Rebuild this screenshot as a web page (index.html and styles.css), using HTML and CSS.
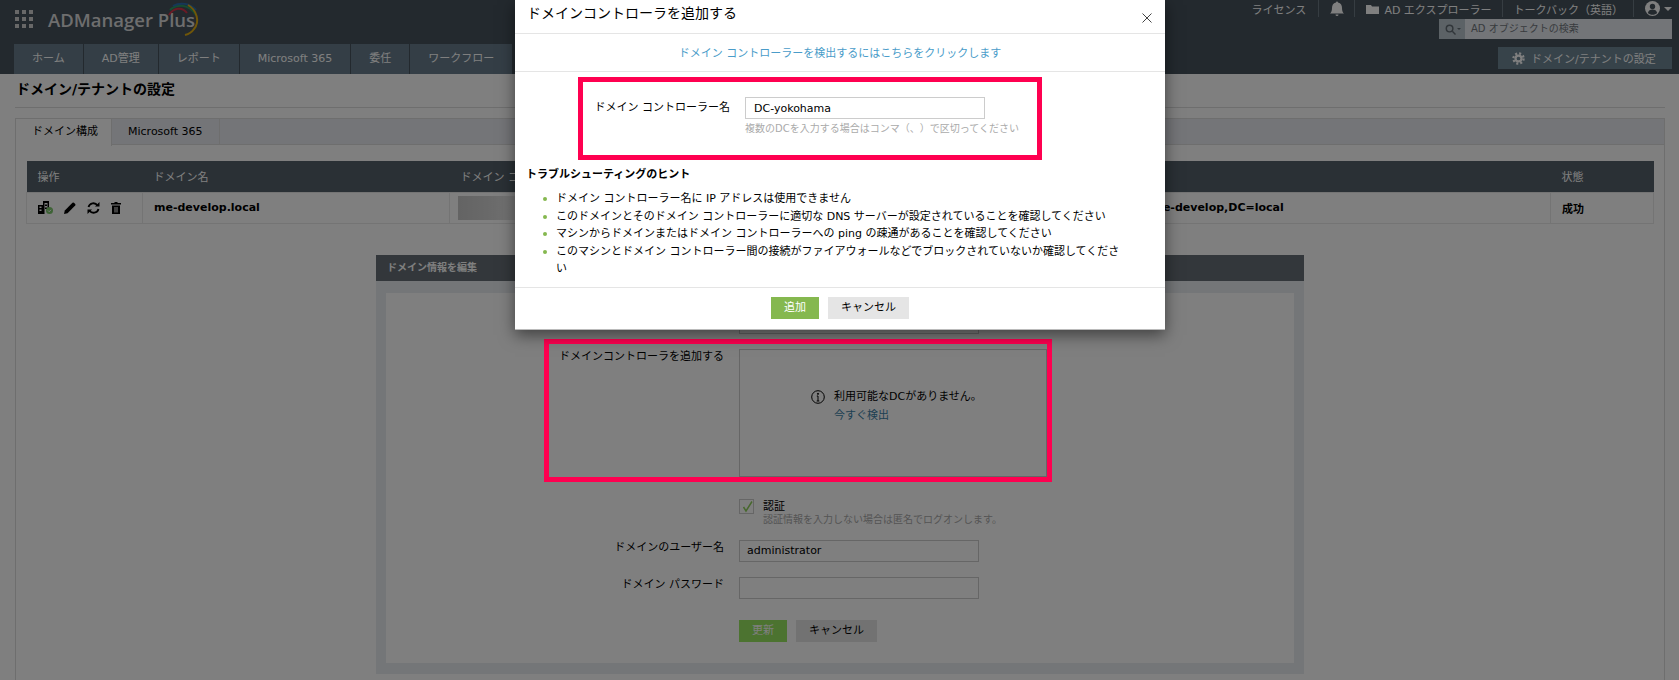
FILE: index.html
```html
<!DOCTYPE html>
<html lang="ja">

<head>
    <meta charset="utf-8" />
    <title>ドメイン/テナントの設定</title>
    <link rel="stylesheet" href="styles.css">
</head>

<body>
    <header class="top_bar">
        <div class="top_left">
            <div class="logo_row">
                <i class="app_grid"><b></b><b></b><b></b><b></b><b></b><b></b><b></b><b></b><b></b></i>
                <span class="logo_text">ADManager Plus</span>
                <svg class="logo_arc" width="36" height="34" viewBox="0 0 36 34" fill="none" stroke-width="2">
                    <path d="M2 13C6 6 15 4 20 11" stroke="#d4354a" />
                    <path d="M3 8C9 2 21 1 29 13" stroke="#2d9a62" />
                    <path d="M6 4C13 0 23 1 29 8" stroke="#2a6fb0" />
                    <path d="M21 3C30 8 33 20 27 27C25 30 22 32 18 33" stroke="#e0ac10" />
                </svg>
            </div>
            <nav class="main_nav">
                <a>ホーム</a><a>AD管理</a><a>レポート</a><a>Microsoft 365</a><a>委任</a><a>ワークフロー</a>
            </nav>
        </div>
        <div class="top_right">
            <div class="util_bar">
                <span class="util_item util_first">ライセンス</span>
                <span class="util_item">
                    <svg width="14" height="16" viewBox="0 0 14 16" fill="#fff">
                        <path d="M6 1.500a1 1 0 0 1 2 0C11 2 12 4.500 12 7c0 3 .8 4.500 2 5.500H0C1.200 11.500 2 10 2 7c0-2.500 1-5 4-5.500z" />
                        <path d="M5.500 13.500h3a1.500 1.500 0 0 1-3 0z" />
                    </svg>
                </span>
                <span class="util_item">
                    <svg class="folder_icon" width="13" height="10" viewBox="0 0 13 10" fill="#fff">
                        <path d="M0 1h5l1 1.500h7V10H0z" />
                    </svg>
                    AD エクスプローラー
                </span>
                <span class="util_item">トークバック（英語）</span>
                <span class="util_item util_user">
                    <svg width="15" height="15" viewBox="0 0 15 15">
                        <circle cx="7.500" cy="7.500" r="7.500" fill="#fff" />
                        <circle cx="7.500" cy="5.500" r="2.700" fill="#46525c" />
                        <path d="M2.800 12c.5-2.500 2.500-3.500 4.700-3.500s4.200 1 4.700 3.500c-1.200 1.200-2.900 1.800-4.700 1.800S4 13.200 2.800 12z" fill="#46525c" />
                    </svg>
                    <i class="caret"></i>
                </span>
            </div>
            <div class="search_box">
                <span class="search_icon">
                    <svg width="11" height="11" viewBox="0 0 12 12" fill="none" stroke="#626c74" stroke-width="1.600">
                        <circle cx="5" cy="5" r="3.600" />
                        <path d="M8 8l3.500 3.500" />
                    </svg>
                    <i class="caret caret_dark"></i>
                </span>
                <span class="search_text">AD オブジェクトの検索</span>
            </div>
            <a class="domain_btn">
                <svg width="13" height="13" viewBox="0 0 14 14" fill="none" stroke="#fff">
                    <circle cx="7" cy="7" r="3.200" stroke-width="2.400" />
                    <circle cx="7" cy="7" r="5.500" stroke-width="2.400" stroke-dasharray="2.200 2.120" />
                </svg>
                ドメイン/テナントの設定
            </a>
        </div>
    </header>

    <main class="page_main">
        <h1 class="page_title">ドメイン/テナントの設定</h1>
        <div class="tab_box">
            <div class="tab_strip">
                <span class="tab_item tab_active">ドメイン構成</span>
                <span class="tab_item">Microsoft 365</span>
            </div>

            <table class="domain_table">
                <thead>
                    <tr>
                        <th class="col_action">操作</th>
                        <th class="col_name">ドメイン名</th>
                        <th class="col_dc">ドメイン コ</th>
                        <th class="col_dn"></th>
                        <th>状態</th>
                    </tr>
                </thead>
                <tbody>
                    <tr>
                        <td>
                            <div class="row_icons">
                                <svg width="15" height="13" viewBox="0 0 15 13">
                                    <path d="M5 0h6v7H9.500V2h-3v11H0V4h5z" fill="#000" />
                                    <path d="M1.500 5.500h2V7h-2zM1.500 8.500h2V10h-2z" fill="#fff" />
                                    <path d="M7 3.500h2V5H7zM7 6.500h2V8H7z" fill="#000" />
                                    <circle cx="11.500" cy="9.500" r="3.500" fill="#7cc76c" />
                                    <path d="M10 9.500l1.200 1.200L13 8.800" fill="none" stroke="#fff" />
                                </svg>
                                <svg width="12" height="12" viewBox="0 0 12 12">
                                    <path d="M0 12l.8-3.500L8.500.8a1 1 0 0 1 1.400 0l1.300 1.300a1 1 0 0 1 0 1.400L3.500 11.200z" fill="#000" />
                                </svg>
                                <svg width="13" height="12" viewBox="0 0 13 12" fill="none" stroke="#000" stroke-width="1.800">
                                    <path d="M1.500 5A5 5 0 0 1 10.500 3.500" />
                                    <path d="M11.500 7A5 5 0 0 1 2.500 8.500" />
                                    <path d="M8 4.500h4.500V0z" fill="#000" stroke="none" />
                                    <path d="M5 7.500H.5V12z" fill="#000" stroke="none" />
                                </svg>
                                <svg width="10" height="12" viewBox="0 0 10 12">
                                    <path d="M3.500 0h3v1H10v1.500H0V1h3.500zM1 3.500h8V12H1z" fill="#000" />
                                    <path d="M3.500 5h1v5.500h-1zM5.500 5h1v5.500h-1z" fill="#fff" />
                                </svg>
                            </div>
                        </td>
                        <td class="cell_bold">me-develop.local</td>
                        <td><i class="blur_ip"></i></td>
                        <td class="cell_bold">DC=me-develop,DC=local</td>
                        <td class="cell_bold">成功</td>
                    </tr>
                </tbody>
            </table>

            <section class="edit_panel">
                <h2 class="panel_head">ドメイン情報を編集</h2>
                <div class="panel_body">
                    <form class="edit_form">
                        <div class="form_row">
                            <label class="form_label"></label>
                            <input class="form_input" type="text" value="">
                        </div>
                        <div class="form_row">
                            <label class="form_label">ドメインコントローラを追加する</label>
                            <div class="dc_box">
                                <div class="dc_msg">
                                    <svg width="14" height="14" viewBox="0 0 14 14" fill="none" stroke="#000">
                                        <circle cx="7" cy="7" r="6.300" />
                                        <path d="M7 6v5M5.700 11h2.600M5.800 6H7" />
                                        <circle cx="7" cy="3.800" r=".6" fill="#000" />
                                    </svg>
                                    <span>利用可能なDCがありません。</span>
                                </div>
                                <a class="dc_link">今すぐ検出</a>
                            </div>
                        </div>
                        <div class="form_row auth_row">
                            <i class="check_box">
                                <svg width="13" height="13" viewBox="0 0 13 13" fill="none" stroke="#8fd05a" stroke-width="1.500">
                                    <path d="M2.500 7l2.500 4L11 1.500" />
                                </svg>
                            </i>
                            <div>
                                <div class="auth_name">認証</div>
                                <div class="auth_hint">認証情報を入力しない場合は匿名でログオンします。</div>
                            </div>
                        </div>
                        <div class="form_row">
                            <label class="form_label">ドメインのユーザー名</label>
                            <input class="form_input" type="text" value="administrator">
                        </div>
                        <div class="form_row">
                            <label class="form_label">ドメイン パスワード</label>
                            <input class="form_input" type="text" value="">
                        </div>
                        <div class="form_btns">
                            <a class="btn_green btn_update">更新</a>
                            <a class="btn_gray btn_back">キャンセル</a>
                        </div>
                    </form>
                </div>
            </section>
        </div>
    </main>

    <div class="page_mask"></div>
    <div class="pink_frame frame_dc"></div>

    <div class="dc_modal">
        <div class="modal_head">
            <span>ドメインコントローラを追加する</span>
            <svg width="10" height="10" viewBox="0 0 10 10" fill="none" stroke="#444">
                <path d="M.5.500l9 9M9.500.500l-9 9" />
            </svg>
        </div>
        <div class="modal_link">ドメイン コントローラーを検出するにはこちらをクリックします</div>
        <div class="modal_body">
            <div class="dc_field">
                <label class="dc_label">ドメイン コントローラー名</label>
                <div>
                    <input class="dc_input" type="text" value="DC-yokohama">
                    <p class="dc_hint">複数のDCを入力する場合はコンマ（、）で区切ってください</p>
                </div>
            </div>
            <h3 class="tips_title">トラブルシューティングのヒント</h3>
            <ul class="tips_list">
                <li><span>ドメイン コントローラー名に IP アドレスは使用できません</span></li>
                <li><span>このドメインとそのドメイン コントローラーに適切な DNS サーバーが設定されていることを確認してください</span></li>
                <li><span>マシンからドメインまたはドメイン コントローラーへの ping の疎通があることを確認してください</span></li>
                <li><span>このマシンとドメイン コントローラー間の接続がファイアウォールなどでブロックされていないか確認してください</span></li>
            </ul>
            <div class="pink_frame frame_name"></div>
        </div>
        <div class="modal_foot">
            <a class="btn_green btn_add">追加</a>
            <a class="btn_gray btn_cancel">キャンセル</a>
        </div>
    </div>
</body>

</html>
```

FILE: styles.css
```css
* {
    box-sizing: border-box;
}

html,
body {
    margin: 0;
    padding: 0;
    width: 100%;
    height: 680px;
    overflow: hidden;
    background-color: #fff;
    font-family: "DejaVu Sans", "Noto Sans CJK JP", sans-serif;
    font-size: 11px;
    color: #000;
    text-spacing-trim: space-all;
}

h1,
h2,
h3,
p,
ul {
    margin: 0;
    padding: 0;
}

i {
    display: block;
}

/* header */
.top_bar {
    display: flex;
    justify-content: space-between;
    height: 74px;
    padding: 0 7px 0 14px;
    background-color: #46525c;
    color: #fff;
}

.logo_row {
    position: relative;
    display: flex;
    align-items: center;
    height: 44px;
    padding: 6px 0 12px 1px;
}

.app_grid {
    display: grid;
    grid-template-columns: repeat(3, 4px);
    grid-gap: 3px;
    margin-right: 15px;
}

.app_grid b {
    height: 4px;
    background-color: #d0d0d0;
}

.logo_text {
    font-family: "Open Sans", sans-serif;
    font-size: 18.500px;
    font-weight: 600;
    color: #dcdcdc;
}

.logo_arc {
    position: absolute;
    left: 153px;
    top: 2px;
}

.main_nav {
    display: flex;
    height: 30px;
}

.main_nav a {
    padding: 0 18px;
    margin-right: 1px;
    line-height: 30px;
    background-color: #687c8c;
    white-space: nowrap;
}

.top_right {
    display: flex;
    flex-direction: column;
    align-items: flex-end;
}

.util_bar {
    display: flex;
    align-items: center;
    height: 17px;
}

.util_item {
    display: flex;
    align-items: center;
    height: 17px;
    padding: 0 10px 0 11px;
    border-left: 1px solid #6c7a84;
}

.util_first {
    padding-right: 12px;
    border-left: none;
}

.folder_icon {
    margin-right: 5px;
}

.util_user {
    padding-right: 0;
}

.util_user svg {
    margin-right: 4px;
}

.caret {
    width: 0;
    height: 0;
    border-left: 4px solid transparent;
    border-right: 4px solid transparent;
    border-top: 4px solid #fff;
}

.caret_dark {
    border-left-width: 2px;
    border-right-width: 2px;
    border-top: 2px solid #626c74;
    margin-left: 1px;
}

.search_box {
    display: flex;
    width: 233px;
    height: 20px;
    margin-top: 2px;
    background-color: #e6eaf0;
}

.search_icon {
    display: flex;
    align-items: center;
    width: 26px;
    padding-left: 6px;
    background-color: #b8c4cc;
}

.search_text {
    padding-left: 6px;
    line-height: 20px;
    font-size: 10px;
    color: #70767c;
}

.domain_btn {
    display: flex;
    align-items: center;
    width: 174px;
    height: 22px;
    margin-top: 8px;
    padding-left: 14px;
    background-color: #6e8694;
}

.domain_btn svg {
    margin-right: 6px;
}

/* page */
.page_main {
    padding: 0 14px 0 15px;
}

.page_title {
    height: 34px;
    padding: 7px 0 0 1px;
    border-bottom: 1px solid #ddd;
    font-size: 14px;
    line-height: 16px;
    font-weight: bold;
}

.tab_box {
    height: 562px;
    margin-top: 10px;
    border: 1px solid #ddd;
    border-bottom: none;
}

.tab_strip {
    display: flex;
    height: 26px;
    background-color: #e8eaf0;
    border-bottom: 1px solid #ddd;
}

.tab_item {
    height: 26px;
    padding: 0 16px;
    line-height: 26px;
    border-right: 1px solid #ddd;
}

.tab_active {
    height: 27px;
    width: 96px;
    padding-right: 0;
    background-color: #fff;
}

.domain_table {
    width: 1628px;
    margin: 16px 10px 0;
    table-layout: fixed;
    border-collapse: collapse;
}

.col_action {
    width: 116px;
}

.col_name {
    width: 307px;
}

.col_dc {
    width: 664px;
}

.col_dn {
    width: 437px;
}

.domain_table th {
    height: 31px;
    padding: 0 11px;
    text-align: left;
    font-weight: normal;
    color: #fff;
    background-color: #54606a;
    white-space: nowrap;
}

.domain_table td {
    height: 31px;
    padding: 0 11px;
    border: 1px solid #e8e8e8;
}

.cell_bold {
    font-weight: bold;
}

.row_icons {
    display: flex;
    align-items: center;
    gap: 11px;
}

.blur_ip {
    width: 80px;
    height: 24px;
    margin-left: -3px;
    background: linear-gradient(to right, #c8c8c8, #d4d4d4 40%, #fff);
}

/* edit panel */
.edit_panel {
    width: 928px;
    margin: 31px 0 0 360px;
}

.panel_head {
    height: 26px;
    padding-left: 11px;
    line-height: 25px;
    font-size: 10px;
    font-weight: bold;
    color: #fff;
    background-color: #666f76;
}

.panel_body {
    padding: 12px 10px 11px;
    background-color: #e8ecf0;
}

.edit_form {
    height: 370px;
    padding-top: 19px;
    background-color: #fff;
}

.form_row {
    display: flex;
    margin-bottom: 15px;
}

.form_label {
    width: 338px;
    margin-right: 15px;
    line-height: 16px;
    text-align: right;
}

.form_input {
    width: 240px;
    height: 22px;
    padding: 0 7px;
    border: 1px solid #ccc;
    outline: none;
    font: inherit;
}

.dc_box {
    display: flex;
    flex-direction: column;
    justify-content: center;
    width: 308px;
    height: 128px;
    padding: 0 0 14px 71px;
    border: 1px solid #ccc;
}

.form_row:nth-child(2) {
    margin-bottom: 22px;
}

.dc_msg {
    display: flex;
    align-items: center;
    gap: 9px;
    line-height: 20px;
}

.dc_link {
    margin-left: 23px;
    line-height: 17px;
    color: #3b7fa6;
}

.auth_row {
    height: 27px;
    margin-left: 353px;
    margin-bottom: 14px;
}

.check_box {
    width: 15px;
    height: 15px;
    margin-right: 9px;
    padding: 0 0 0 1px;
    border: 1px solid #ccc;
}

.auth_name {
    line-height: 15px;
}

.auth_hint {
    line-height: 12px;
    font-size: 10px;
    color: #aaa;
}

.form_btns {
    display: flex;
    gap: 9px;
    margin: 21px 0 0 353px;
}

.btn_green,
.btn_gray {
    display: block;
    height: 22px;
    line-height: 22px;
    text-align: center;
}

.btn_green {
    width: 48px;
    color: #fff;
    background-color: #85b84f;
}

.btn_update {
    background-color: #98e660;
}

.btn_gray {
    width: 81px;
    background-color: #e5e5e5;
}

/* modal */
.page_mask {
    position: absolute;
    left: 0;
    top: 0;
    width: 100%;
    height: 100%;
    background-color: rgba(0, 0, 0, 0.5);
}

.dc_modal {
    position: absolute;
    left: 515px;
    top: 0;
    display: flex;
    flex-direction: column;
    width: 650px;
    height: 330px;
    background-color: #fff;
    border-bottom: 1px solid #bbb;
    box-shadow: 0 5px 15px rgba(0, 0, 0, 0.5);
}

.modal_head {
    display: flex;
    justify-content: space-between;
    height: 34px;
    padding: 4px 13px 0 12px;
    border-bottom: 1px solid #e5e5e5;
    font-size: 14px;
    line-height: 18px;
}

.modal_head svg {
    margin-top: 9px;
}

.modal_link {
    height: 38px;
    padding-top: 1px;
    line-height: 38px;
    text-align: center;
    color: #4a9cc9;
    border-bottom: 1px solid #e5e5e5;
}

.modal_body {
    position: relative;
    flex: 1;
    padding: 25px 11px 0;
}

.dc_field {
    display: flex;
}

.dc_label {
    width: 204px;
    margin-right: 15px;
    line-height: 22px;
    text-align: right;
}

.dc_input {
    display: block;
    width: 240px;
    height: 22px;
    padding: 0 8px;
    border: 1px solid #ccc;
    outline: none;
    font: inherit;
}

.dc_hint {
    margin-top: 2px;
    line-height: 16px;
    font-size: 10px;
    color: #aaa;
}

.tips_title {
    margin-top: 30px;
    font-size: 11px;
    line-height: 16px;
    font-weight: bold;
}

.tips_list {
    width: 580px;
    margin: 7px 0 0 17px;
    list-style: none;
}

.tips_list li {
    display: flex;
    line-height: 17.500px;
}

.tips_list li:before {
    content: "";
    flex: none;
    width: 4px;
    height: 4px;
    margin: 7px 9px 0 0;
    border-radius: 50%;
    background-color: #85b84f;
}

.modal_foot {
    display: flex;
    justify-content: center;
    gap: 9px;
    height: 42px;
    padding-top: 9px;
    border-top: 1px solid #e5e5e5;
}

.pink_frame {
    position: absolute;
    border: 5px solid #ff0050;
}

.frame_dc {
    left: 544px;
    top: 339px;
    width: 508px;
    height: 143px;
}

.frame_name {
    left: 63px;
    top: 5px;
    width: 464px;
    height: 83px;
}
```
